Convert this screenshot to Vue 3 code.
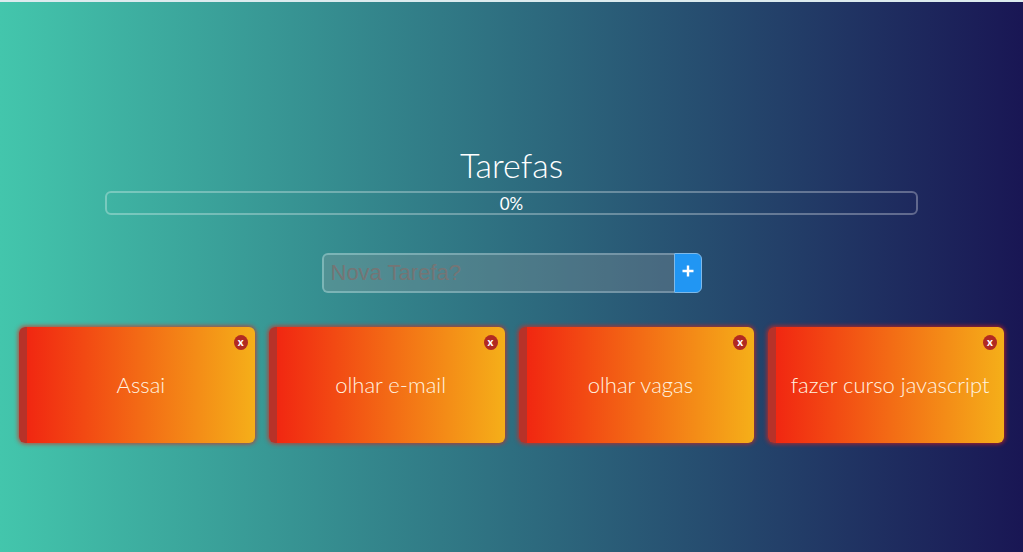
<script setup>
import { computed, ref } from 'vue'

const tasks = ref([
  { id: 1, name: 'Assai', done: false },
  { id: 2, name: 'olhar e-mail', done: false },
  { id: 3, name: 'olhar vagas', done: false },
  { id: 4, name: 'fazer curso javascript', done: false },
])
const name = ref('')

const progress = computed(() => {
  const total = tasks.value.length
  return total ? Math.round((tasks.value.filter((t) => t.done).length / total) * 100) : 0
})

function addTask() {
  const text = name.value.trim()
  if (!text) return
  tasks.value.push({ id: Date.now(), name: text, done: false })
  name.value = ''
}

function removeTask(id) {
  tasks.value = tasks.value.filter((t) => t.id !== id)
}
</script>

<template>
  <main class="page">
    <h1 class="title">Tarefas</h1>

    <div class="progress">
      <span class="progress-bar" :style="{ width: progress + '%' }"></span>
      <span class="progress-value">{{ progress }}%</span>
    </div>

    <form class="new-task" @submit.prevent="addTask">
      <input v-model="name" class="new-input" type="text" placeholder="Nova Tarefa?" aria-label="Nova Tarefa" />
      <button class="new-button" type="submit" aria-label="Adicionar">
        <svg viewBox="0 0 12 12" width="12" height="12" aria-hidden="true">
          <path d="M6 0.5v11M0.5 6h11" fill="none" stroke="#fff" stroke-width="2.4" />
        </svg>
      </button>
    </form>

    <div class="grid">
      <article
        v-for="task in tasks"
        :key="task.id"
        class="task"
        :class="{ done: task.done }"
        @click="task.done = !task.done"
      >
        <button class="close" type="button" :aria-label="'Remover ' + task.name" @click.stop="removeTask(task.id)">x</button>
        <p class="task-name">{{ task.name }}</p>
      </article>
    </div>
  </main>
</template>

<style>
body {
  margin: 0;
}
</style>

<style scoped>
.page {
  box-sizing: border-box;
  min-height: 100vh;
  display: flex;
  flex-direction: column;
  align-items: center;
  justify-content: center;
  padding: 32px 19px 0;
  border-top: 2px solid #dcebee;
  color: #fff;
  font-family: Lato, "Open Sans", sans-serif;
  background: linear-gradient(to right, #43c6ac, #191654);
}

.title {
  margin: 0 0 4px;
  font-size: 34px;
  line-height: 44px;
  font-weight: 300;
}

.progress {
  position: relative;
  box-sizing: border-box;
  width: 82.5%;
  height: 24px;
  border: 2px solid rgba(255, 255, 255, 0.3);
  border-radius: 6px;
  overflow: hidden;
  text-align: center;
}

.progress-bar {
  position: absolute;
  inset: 0 auto 0 0;
  background: #0a0;
}

.progress-value {
  position: relative;
  display: block;
  font-size: 17px;
  line-height: 22px;
}

.new-task {
  display: flex;
  width: 380px;
  max-width: 100%;
  height: 40px;
  margin: 38px 0 34px;
}

.new-input {
  box-sizing: border-box;
  flex: 1;
  min-width: 0;
  padding: 0 7px;
  border: 2px solid rgba(255, 255, 255, 0.35);
  border-right: 0;
  border-radius: 6px 0 0 6px;
  outline: 0;
  color: #fff;
  font-family: "Liberation Sans", Arial, sans-serif;
  font-size: 22px;
  background: rgba(150, 155, 160, 0.3);
  background-clip: padding-box;
}

.new-input::placeholder {
  color: #757575;
}

.new-button {
  box-sizing: border-box;
  display: flex;
  align-items: center;
  justify-content: center;
  width: 28px;
  padding: 0 0 4px;
  border: 1px solid #7fb9e8;
  border-radius: 0 6px 6px 0;
  background: #2196f3;
  cursor: pointer;
}

.grid {
  display: grid;
  grid-template-columns: repeat(auto-fit, minmax(200px, 1fr));
  gap: 14px;
  width: 100%;
}

.task {
  position: relative;
  box-sizing: border-box;
  display: flex;
  align-items: center;
  justify-content: center;
  min-height: 116px;
  border-left: 8px solid #b73229;
  border-radius: 6px;
  background: linear-gradient(to right, #f12711, #f5af19);
  box-shadow: 0 0 4px 1px rgba(225, 35, 25, 0.75);
  cursor: pointer;
}

.task.done {
  border-left-color: #0a0;
}

.task-name {
  margin: 0;
  color: #fff3e0;
  font-size: 22px;
  line-height: 28px;
  font-weight: 300;
  white-space: nowrap;
}

.close {
  position: absolute;
  top: 8px;
  right: 7px;
  width: 14px;
  height: 15px;
  padding: 0 0 2px;
  border: 0;
  border-radius: 50%;
  color: #fff;
  font-family: Lato, sans-serif;
  font-size: 11px;
  line-height: 13px;
  font-weight: 900;
  background: #b12a22;
  cursor: pointer;
}
</style>
